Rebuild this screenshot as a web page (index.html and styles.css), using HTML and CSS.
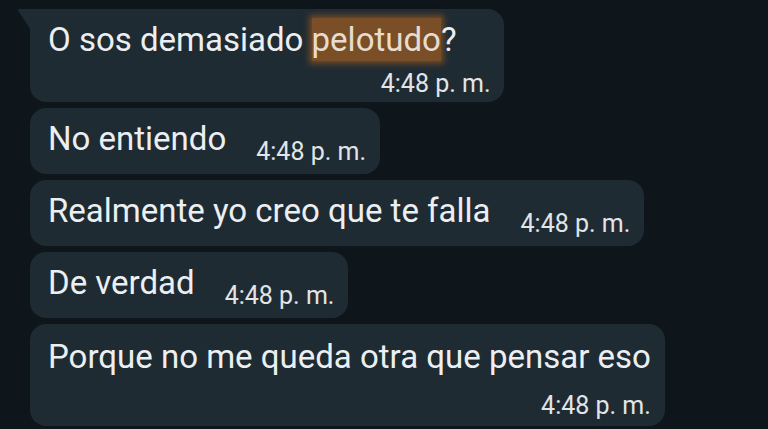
FILE: index.html
```html
<!DOCTYPE html>
<html lang="es">
<head>
  <meta charset="UTF-8">
  <meta name="viewport" content="width=device-width, initial-scale=1.0">
  <title>Chat</title>
  <link rel="stylesheet" href="styles.css">
</head>
<body>

  <div class="chat">
    <div class="msg stack first">
      <span class="msg-text">O sos demasiado <span class="hl">pelotudo</span>?</span>
      <span class="msg-time">4:48 p. m.</span>
    </div>
    <div class="msg">
      <span class="msg-text">No entiendo</span>
      <span class="msg-time">4:48 p. m.</span>
    </div>
    <div class="msg">
      <span class="msg-text">Realmente yo creo que te falla</span>
      <span class="msg-time">4:48 p. m.</span>
    </div>
    <div class="msg">
      <span class="msg-text">De verdad</span>
      <span class="msg-time">4:48 p. m.</span>
    </div>
    <div class="msg stack last">
      <span class="msg-text">Porque no me queda otra que pensar eso</span>
      <span class="msg-time">4:48 p. m.</span>
    </div>
  </div>

</body>
</html>
```

FILE: styles.css
```css
body {
  margin: 0;
  background-color: #0e151b;
  font-family: Roboto, "Noto Sans", sans-serif;
  color: #eceff1;
  overflow: hidden;
}

.chat {
  display: flex;
  flex-direction: column;
  align-items: flex-start;
  gap: 6px;
  padding: 9px 0 0 30px;
}

.msg {
  position: relative;
  display: flex;
  align-items: flex-end;
  gap: 30px;
  padding: 11px 14px 9px 18px;
  background-color: #1f2b33;
  border-radius: 16px;
}

.msg-text {
  font-size: 33px;
  line-height: 40px;
  margin-bottom: 6px;
  white-space: nowrap;
}

.msg-time {
  font-size: 25px;
  line-height: 26px;
  color: #e2e5e7;
  white-space: nowrap;
}

.msg.stack {
  flex-direction: column;
  align-items: stretch;
  gap: 0;
  padding-bottom: 5px;
}

.msg.stack .msg-text {
  margin-bottom: 0;
}

.msg.stack .msg-time {
  margin-top: 11px;
  text-align: right;
}

.msg.last {
  padding-top: 13px;
  padding-bottom: 7px;
}

.msg.last .msg-time {
  margin-top: 16px;
}

.msg.first {
  border-top-left-radius: 0;
  padding-right: 13px;
}

.msg.first .msg-text {
  margin-right: 34px;
}

/* tail */
.msg.first::before {
  content: "";
  position: absolute;
  left: -13px;
  top: 0;
  width: 14px;
  height: 21px;
  background-color: #1f2b33;
  clip-path: polygon(0 0, 100% 0, 100% 100%);
  border-top-left-radius: 3px;
}

.hl {
  background-color: #7a4f27;
  box-shadow: 0 0 6px 3px rgba(122, 79, 39, 0.85);
  color: #e8dccf;
  padding: 2px 0;
}
```
